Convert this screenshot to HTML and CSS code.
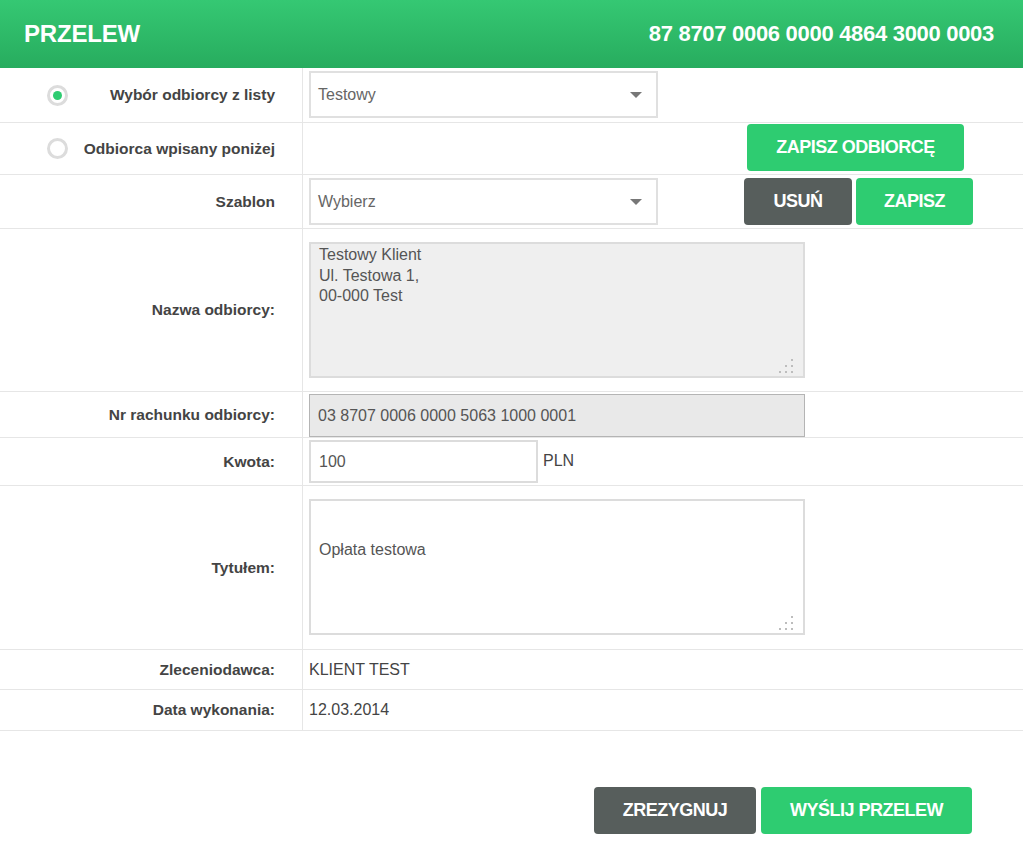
FILE: index.html
```html
<!DOCTYPE html>
<html lang="pl">
<head>
<meta charset="utf-8">
<title>Przelew</title>
<link rel="stylesheet" href="styles.css">
</head>
<body>
<header class="topbar">
  <h1 class="title">PRZELEW</h1>
  <div class="account">87 8707 0006 0000 4864 3000 0003</div>
</header>

<main class="form">
  <div class="row r1">
    <div class="label radio-label"><span class="radio checked"></span><span>Wybór odbiorcy z listy</span></div>
    <div class="field">
      <div class="select"><span>Testowy</span><span class="arrow"></span></div>
    </div>
  </div>
  <div class="row r2">
    <div class="label radio-label"><span class="radio"></span><span>Odbiorca wpisany poniżej</span></div>
    <div class="field field-save">
      <button class="btn green btn-save-rec">ZAPISZ ODBIORCĘ</button>
    </div>
  </div>
  <div class="row r3">
    <div class="label">Szablon</div>
    <div class="field">
      <div class="select"><span>Wybierz</span><span class="arrow"></span></div>
      <div class="btn-group">
        <button class="btn dark btn-del">USUŃ</button>
        <button class="btn green btn-save">ZAPISZ</button>
      </div>
    </div>
  </div>
  <div class="row r4">
    <div class="label">Nazwa odbiorcy:</div>
    <div class="field top">
      <div class="textarea disabled">Testowy Klient<br>Ul. Testowa 1,<br>00-000 Test<span class="grip"><svg width="16" height="16" viewBox="0 0 16 16"><g fill="#bdbdbd"><rect x="12" y="1" width="2" height="2"/><rect x="6" y="7" width="2" height="2"/><rect x="12" y="7" width="2" height="2"/><rect x="0" y="13" width="2" height="2"/><rect x="6" y="13" width="2" height="2"/><rect x="12" y="13" width="2" height="2"/></g></svg></span></div>
    </div>
  </div>
  <div class="row r5">
    <div class="label">Nr rachunku odbiorcy:</div>
    <div class="field">
      <div class="input readonly">03 8707 0006 0000 5063 1000 0001</div>
    </div>
  </div>
  <div class="row r6">
    <div class="label">Kwota:</div>
    <div class="field">
      <div class="input amount">100</div>
      <span class="currency">PLN</span>
    </div>
  </div>
  <div class="row r7">
    <div class="label">Tytułem:</div>
    <div class="field top">
      <div class="textarea title-area">Opłata testowa<span class="grip"><svg width="16" height="16" viewBox="0 0 16 16"><g fill="#bdbdbd"><rect x="12" y="1" width="2" height="2"/><rect x="6" y="7" width="2" height="2"/><rect x="12" y="7" width="2" height="2"/><rect x="0" y="13" width="2" height="2"/><rect x="6" y="13" width="2" height="2"/><rect x="12" y="13" width="2" height="2"/></g></svg></span></div>
    </div>
  </div>
  <div class="row r8">
    <div class="label">Zleceniodawca:</div>
    <div class="field text">KLIENT TEST</div>
  </div>
  <div class="row r9">
    <div class="label">Data wykonania:</div>
    <div class="field text">12.03.2014</div>
  </div>
</main>

<footer class="actions">
  <button class="btn dark btn-cancel">ZREZYGNUJ</button>
  <button class="btn green btn-send">WYŚLIJ PRZELEW</button>
</footer>
</body>
</html>
```

FILE: styles.css
```css
* { box-sizing: border-box; }

body {
  margin: 0;
  background: #fff;
  font-family: "Liberation Sans", Arial, sans-serif;
  color: #444;
}

.topbar {
  height: 68px;
  background: linear-gradient(#35c873, #27ac5e);
  display: flex;
  align-items: center;
  justify-content: space-between;
  padding: 0 29px 0 24px;
  color: #fff;
}

.title {
  margin: 0;
  font-size: 24px;
  font-weight: bold;
  letter-spacing: -0.2px;
}

.account {
  font-size: 22px;
  font-weight: bold;
  letter-spacing: -0.3px;
}

.form {
  display: flex;
  flex-direction: column;
}

.row {
  display: grid;
  grid-template-columns: 303px 1fr;
  border-bottom: 1px solid #e6e6e6;
}

.r1 { height: 55px; }
.r2 { height: 52px; }
.r3 { height: 54px; }
.r4 { height: 163px; }
.r5 { height: 46px; }
.r6 { height: 48px; }
.r7 { height: 164px; }
.r8 { height: 40px; }
.r9 { height: 41px; }

.label {
  border-right: 1px solid #e6e6e6;
  display: flex;
  align-items: center;
  justify-content: flex-end;
  padding-right: 27px;
  font-size: 15.5px;
  font-weight: bold;
  color: #444;
}

.radio-label {
  justify-content: space-between;
  padding-left: 47px;
}

.radio {
  width: 21px;
  height: 21px;
  border-radius: 50%;
  border: 3px solid #dcdcdc;
  background: #fff;
  display: flex;
  align-items: center;
  justify-content: center;
}

.radio.checked::after {
  content: "";
  width: 9px;
  height: 9px;
  border-radius: 50%;
  background: #2ecc71;
}

.field {
  display: flex;
  align-items: center;
  padding-left: 6px;
  font-size: 16px;
  color: #555;
}

.field.top { align-items: flex-start; padding-top: 13px; }
.r1 .field { align-items: flex-start; padding-top: 3px; }
.r3 .field { align-items: flex-start; padding-top: 3px; }
.r5 .field { align-items: flex-start; padding-top: 2px; }
.r6 .field { align-items: flex-start; padding-top: 2px; }

.field.text { color: #444; padding-top: 0; }

.select {
  width: 349px;
  height: 47px;
  border: 2px solid #e0e0e0;
  background: #fff;
  display: flex;
  align-items: center;
  justify-content: space-between;
  padding: 0 14px 0 7px;
  color: #666;
  font-size: 16px;
}

.arrow {
  width: 0;
  height: 0;
  border-left: 6px solid transparent;
  border-right: 6px solid transparent;
  border-top: 6px solid #777;
}

.field-save {
  padding-left: 444px;
  align-items: flex-start;
  padding-top: 1px;
}

.btn-group {
  display: flex;
  gap: 4px;
  margin-left: 86px;
}

.btn {
  border: none;
  border-radius: 4px;
  height: 47px;
  color: #fff;
  font-family: "Liberation Sans", Arial, sans-serif;
  font-size: 18px;
  font-weight: bold;
  letter-spacing: -0.5px;
  padding: 0;
  cursor: pointer;
}

.btn.green { background: #2ecc71; }
.btn.dark { background: #575e5c; }

.btn-save-rec { width: 217px; }
.btn-del { width: 108px; }
.btn-save { width: 117px; }

.textarea {
  position: relative;
  width: 496px;
  height: 136px;
  border: 2px solid #dcdcdc;
  padding: 1px 8px;
  line-height: 20.5px;
  font-size: 16px;
  color: #555;
}

.textarea.disabled {
  background: #efefef;
}

.title-area {
  background: #fff;
  padding-top: 39px;
  color: #555;
}

.grip {
  position: absolute;
  right: 8px;
  bottom: 2px;
  line-height: 0;
}

.input {
  height: 43px;
  border: 2px solid #dcdcdc;
  display: flex;
  align-items: center;
  padding-left: 8px;
  font-size: 16px;
  color: #555;
}

.input.readonly {
  width: 496px;
  background: #e9e9e9;
  border: 1px solid #b4b4b4;
  height: 43px;
}

.input.amount {
  width: 229px;
  background: #fff;
}

.currency {
  margin-left: 5px;
  margin-top: 12px;
  font-size: 16px;
  color: #444;
}

.actions {
  display: flex;
  justify-content: flex-end;
  gap: 5px;
  padding: 56px 51px 0 0;
}

.btn-cancel { width: 162px; }
.btn-send { width: 211px; }
```
